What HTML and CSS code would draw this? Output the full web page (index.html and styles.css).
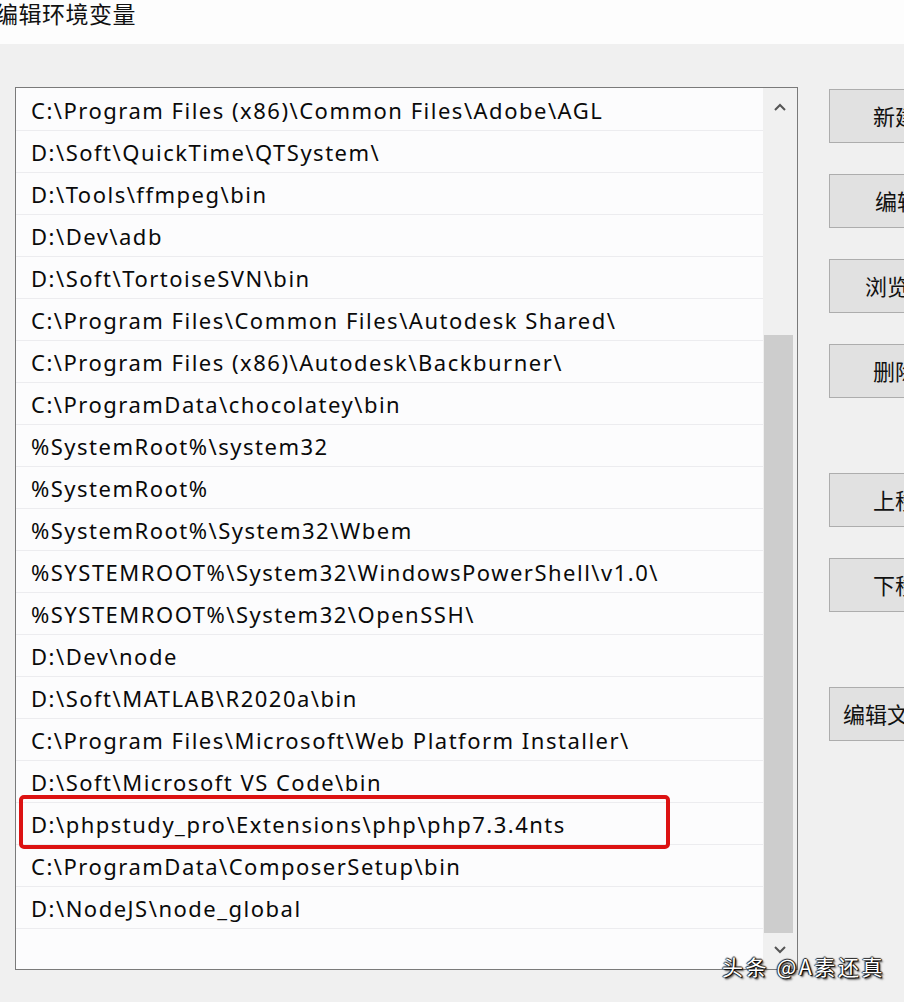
FILE: index.html
```html
<!DOCTYPE html>
<html lang="zh">
<head>
<meta charset="utf-8">
<title>编辑环境变量</title>
<link rel="stylesheet" href="styles.css">
</head>
<body>
<div class="window">
  <header class="titlebar"><span class="title">编辑环境变量</span></header>
  <main class="content">
    <div class="listbox">
      <ul class="rows">
        <li class="row">C:\Program Files (x86)\Common Files\Adobe\AGL</li>
        <li class="row">D:\Soft\QuickTime\QTSystem\</li>
        <li class="row">D:\Tools\ffmpeg\bin</li>
        <li class="row">D:\Dev\adb</li>
        <li class="row">D:\Soft\TortoiseSVN\bin</li>
        <li class="row">C:\Program Files\Common Files\Autodesk Shared\</li>
        <li class="row">C:\Program Files (x86)\Autodesk\Backburner\</li>
        <li class="row">C:\ProgramData\chocolatey\bin</li>
        <li class="row">%SystemRoot%\system32</li>
        <li class="row">%SystemRoot%</li>
        <li class="row">%SystemRoot%\System32\Wbem</li>
        <li class="row">%SYSTEMROOT%\System32\WindowsPowerShell\v1.0\</li>
        <li class="row">%SYSTEMROOT%\System32\OpenSSH\</li>
        <li class="row">D:\Dev\node</li>
        <li class="row">D:\Soft\MATLAB\R2020a\bin</li>
        <li class="row">C:\Program Files\Microsoft\Web Platform Installer\</li>
        <li class="row">D:\Soft\Microsoft VS Code\bin</li>
        <li class="row row-marked">D:\phpstudy_pro\Extensions\php\php7.3.4nts<span class="mark"></span></li>
        <li class="row">C:\ProgramData\ComposerSetup\bin</li>
        <li class="row">D:\NodeJS\node_global</li>
      </ul>
      <div class="scrollbar">
        <svg class="arrow" width="14" height="10" viewBox="0 0 14 10"><path d="M2 8 L7 3 L12 8" fill="none" stroke="#555" stroke-width="2"/></svg>
        <div class="track"><div class="thumb"></div></div>
        <svg class="arrow" width="14" height="10" viewBox="0 0 14 10"><path d="M2 2 L7 7 L12 2" fill="none" stroke="#555" stroke-width="2"/></svg>
      </div>
    </div>
    <div class="buttons">
      <div class="group">
        <button class="btn btn-new">新建</button>
        <button class="btn btn-edit">编辑</button>
        <button class="btn btn-browse">浏览</button>
        <button class="btn btn-del">删除</button>
      </div>
      <div class="group">
        <button class="btn btn-up">上移</button>
        <button class="btn btn-down">下移</button>
      </div>
      <div class="group">
        <button class="btn btn-text">编辑文本</button>
      </div>
    </div>
  </main>
  <div class="watermark">头条 @A素还真</div>
</div>
</body>
</html>
```
FILE: styles.css
```css
* { box-sizing: border-box; }
html, body {
  margin: 0;
  padding: 0;
  width: 904px;
  height: 1002px;
  overflow: hidden;
  background: #f0f0f0;
  font-family: "Noto Sans", "Noto Sans CJK SC", sans-serif;
  color: #000;
}
.window {
  position: relative;
  width: 904px;
  height: 1002px;
}
.titlebar {
  height: 44px;
  background: #fdfdfd;
  overflow: hidden;
}
.title {
  display: block;
  margin-left: -5px;
  font-family: "Noto Sans CJK SC", sans-serif;
  font-size: 23px;
  line-height: 27px;
  letter-spacing: 0.5px;
  color: #111;
}
.content {
  display: flex;
  align-items: flex-start;
  padding: 43px 0 0 15px;
  gap: 31px;
}
.listbox {
  flex: none;
  display: flex;
  width: 783px;
  height: 883px;
  border: 1px solid #7a7a7a;
  background: #fcfcfd;
}
.rows {
  flex: 1;
  list-style: none;
  margin: 0;
  padding: 1px 0 0 0;
}
.row {
  position: relative;
  height: 42px;
  border-bottom: 1px solid #ececef;
  padding-left: 15px;
  font-size: 22px;
  line-height: 42px;
  letter-spacing: 1.5px;
  white-space: nowrap;
  color: #0a0a0a;
}
.mark {
  position: absolute;
  left: 3px;
  top: -8px;
  width: 651px;
  height: 54px;
  border: 4px solid #dc1212;
  border-radius: 5px;
}
.scrollbar {
  flex: none;
  width: 34px;
  display: flex;
  flex-direction: column;
  align-items: center;
  background: #f0f0f0;
}
.arrow {
  flex: none;
  margin: 14px 0 12px;
}
.scrollbar .arrow:last-child {
  margin: 10px 0 14px;
}
.track {
  flex: 1;
  width: 100%;
  display: flex;
  flex-direction: column;
  justify-content: flex-end;
  padding: 0 4px 2px 1px;
}
.thumb {
  height: 598px;
  background: #cdcdcd;
}
.buttons {
  flex: none;
  display: flex;
  flex-direction: column;
  gap: 75px;
  padding-top: 2px;
}
.group {
  display: flex;
  flex-direction: column;
  gap: 31px;
}
.btn {
  width: 130px;
  height: 54px;
  border: 1px solid #adadad;
  background: #e1e1e1;
  font-family: "Noto Sans CJK SC", sans-serif;
  font-size: 22px;
  color: #111;
  text-align: left;
  padding: 0 0 2px 43px;
}
.btn-edit { padding-left: 45px; }
.btn-browse { padding-left: 35px; }
.btn-text { padding-left: 13px; }
.watermark {
  position: absolute;
  left: 722px;
  top: 953px;
  font-family: "Noto Sans CJK SC", sans-serif;
  font-size: 21px;
  line-height: 26px;
  letter-spacing: 2.6px;
  color: #fff;
  white-space: nowrap;
  text-shadow: 1px 1px 1px #000, -1px 0 1px #222, 0 -1px 1px #222, 1px 0 1px #111, 2px 2px 2px #444;
}
```
